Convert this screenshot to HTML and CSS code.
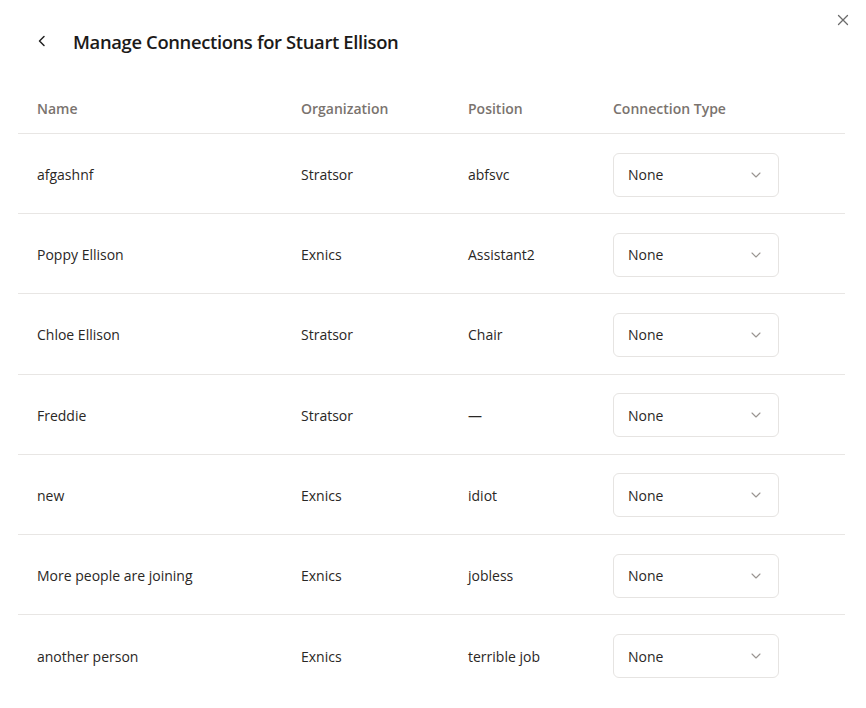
FILE: index.html
```html
<!DOCTYPE html>
<html>
<head>
<meta charset="utf-8">
<link rel="stylesheet" href="styles.css">
</head>
<body>
<div class="modal">
  <button class="close" aria-label="Close">
    <svg width="12" height="12" viewBox="0 0 12 12"><path d="M1.5 1.5L10.5 10.5M10.5 1.5L1.5 10.5" stroke="#6b6b6b" stroke-width="1.3" fill="none" stroke-linecap="round"/></svg>
  </button>
  <div class="title-row">
    <span class="back">
      <svg width="10" height="12" viewBox="0 0 10 12"><path d="M7 1.5L2.5 6L7 10.5" stroke="#222" stroke-width="1.5" fill="none" stroke-linecap="round" stroke-linejoin="round"/></svg>
    </span>
    <h1 class="title">Manage Connections for Stuart Ellison</h1>
  </div>
  <div class="table">
    <div class="row head">
      <div class="cell">Name</div>
      <div class="cell">Organization</div>
      <div class="cell">Position</div>
      <div class="cell">Connection Type</div>
    </div>
    <div class="row">
      <div class="cell">afgashnf</div><div class="cell">Stratsor</div><div class="cell">abfsvc</div>
      <div class="cell"><div class="select"><span>None</span><svg class="chev" width="10" height="6" viewBox="0 0 10 6"><path d="M1 1L5 5L9 1" stroke="#9a9591" stroke-width="1.1" fill="none" stroke-linecap="round" stroke-linejoin="round"/></svg></div></div>
    </div>
    <div class="row">
      <div class="cell">Poppy Ellison</div><div class="cell">Exnics</div><div class="cell">Assistant2</div>
      <div class="cell"><div class="select"><span>None</span><svg class="chev" width="10" height="6" viewBox="0 0 10 6"><path d="M1 1L5 5L9 1" stroke="#9a9591" stroke-width="1.1" fill="none" stroke-linecap="round" stroke-linejoin="round"/></svg></div></div>
    </div>
    <div class="row">
      <div class="cell">Chloe Ellison</div><div class="cell">Stratsor</div><div class="cell">Chair</div>
      <div class="cell"><div class="select"><span>None</span><svg class="chev" width="10" height="6" viewBox="0 0 10 6"><path d="M1 1L5 5L9 1" stroke="#9a9591" stroke-width="1.1" fill="none" stroke-linecap="round" stroke-linejoin="round"/></svg></div></div>
    </div>
    <div class="row">
      <div class="cell">Freddie</div><div class="cell">Stratsor</div><div class="cell">—</div>
      <div class="cell"><div class="select"><span>None</span><svg class="chev" width="10" height="6" viewBox="0 0 10 6"><path d="M1 1L5 5L9 1" stroke="#9a9591" stroke-width="1.1" fill="none" stroke-linecap="round" stroke-linejoin="round"/></svg></div></div>
    </div>
    <div class="row">
      <div class="cell">new</div><div class="cell">Exnics</div><div class="cell">idiot</div>
      <div class="cell"><div class="select"><span>None</span><svg class="chev" width="10" height="6" viewBox="0 0 10 6"><path d="M1 1L5 5L9 1" stroke="#9a9591" stroke-width="1.1" fill="none" stroke-linecap="round" stroke-linejoin="round"/></svg></div></div>
    </div>
    <div class="row">
      <div class="cell">More people are joining</div><div class="cell">Exnics</div><div class="cell">jobless</div>
      <div class="cell"><div class="select"><span>None</span><svg class="chev" width="10" height="6" viewBox="0 0 10 6"><path d="M1 1L5 5L9 1" stroke="#9a9591" stroke-width="1.1" fill="none" stroke-linecap="round" stroke-linejoin="round"/></svg></div></div>
    </div>
    <div class="row">
      <div class="cell">another person</div><div class="cell">Exnics</div><div class="cell">terrible job</div>
      <div class="cell"><div class="select"><span>None</span><svg class="chev" width="10" height="6" viewBox="0 0 10 6"><path d="M1 1L5 5L9 1" stroke="#9a9591" stroke-width="1.1" fill="none" stroke-linecap="round" stroke-linejoin="round"/></svg></div></div>
    </div>
  </div>
</div>
</body>
</html>
```
FILE: styles.css
```css
* { box-sizing: border-box; }
html, body { margin: 0; padding: 0; background: #fff; }
body {
  font-family: "Open Sans", "Noto Sans", sans-serif;
  color: #2a2725;
  font-size: 14px;
}
.modal {
  position: relative;
  width: 866px;
  height: 708px;
  padding: 23px 21px 0 18px;
  overflow: hidden;
}
.close {
  position: absolute;
  top: 14px;
  right: 17px;
  width: 12px;
  height: 12px;
  padding: 0;
  border: 0;
  background: none;
  display: flex;
}
.title-row {
  display: flex;
  align-items: center;
  height: 36px;
  padding-left: 19px;
}
.back {
  display: flex;
  width: 36px;
}
.title {
  margin: 0;
  font-size: 18.4px;
  font-weight: 600;
  color: #1c1a19;
  letter-spacing: -0.35px;
}
.table {
  margin-top: 24px;
}
.row {
  display: grid;
  grid-template-columns: 264px 167px 145px 1fr;
  align-items: center;
  height: 80.2px;
  padding-top: 2px;
  border-bottom: 1px solid #e8e6e4;
}
.row:last-child { border-bottom: 0; }
.row.head {
  height: 51px;
  padding-top: 0;
  color: #7a736e;
  font-weight: 600;
}
.cell {
  padding-left: 19px;
  white-space: nowrap;
}
.select {
  width: 166px;
  height: 44px;
  border: 1px solid #e6e4e2;
  border-radius: 6px;
  display: flex;
  align-items: center;
  justify-content: space-between;
  padding: 0 17px 0 14px;
  color: #2a2725;
}
.chev { display: block; }
```
